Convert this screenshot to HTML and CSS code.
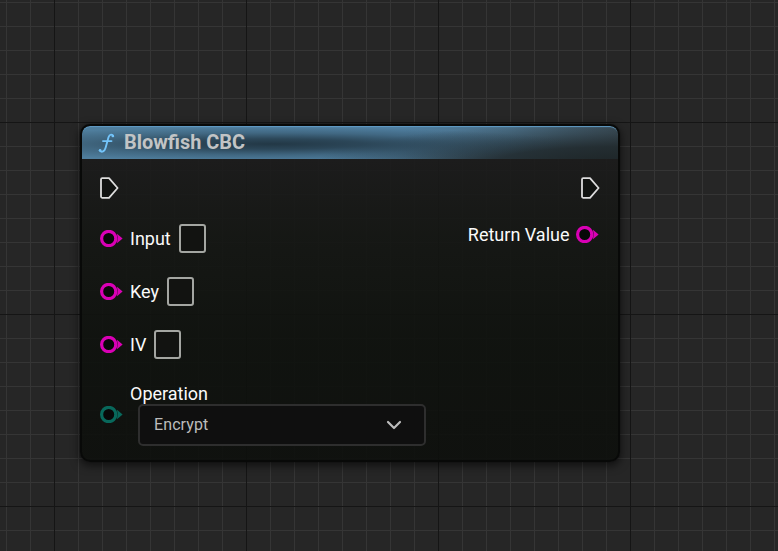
FILE: index.html
```html
<!DOCTYPE html>
<html lang="en">
<head>
<meta charset="utf-8">
<title>Blueprint graph</title>
<link rel="stylesheet" href="styles.css">
</head>
<body>
<svg width="0" height="0" class="defs">
  <symbol id="exec" viewBox="0 0 19 22"><path d="M2.2 1.2H9L17.6 11 9 20.8H2.2Q1 20.8 1 19.6V2.4Q1 1.2 2.2 1.2Z" fill="#101210" stroke="currentColor" stroke-width="1.8" stroke-linejoin="round"/></symbol>
  <symbol id="pin" viewBox="0 0 23 17"><circle cx="8.7" cy="8.5" r="7.1" fill="#080808" stroke="currentColor" stroke-width="3.2"/><path d="M17 3.8 22.6 8.5 17 13.2Q18.4 8.5 17 3.8Z" fill="currentColor"/></symbol>
</svg>
<main class="graph">
  <section class="node">
    <header class="title">
      <svg class="func" viewBox="0 0 17 20" width="17" height="20"><path d="M15.2 3.2C14.5 1 11.6.9 10.5 4.2L7.6 14.8C6.6 18.5 3.7 19.7 1.8 17.7M5 8.1H13.5" fill="none" stroke="currentColor" stroke-width="1.9" stroke-linecap="round"/><circle cx="14.8" cy="3" r="1.3" fill="currentColor"/><circle cx="2.1" cy="17.2" r="1.3" fill="currentColor"/></svg>
      <h1>Blowfish CBC</h1>
    </header>
    <div class="pins">
      <div class="inputs">
        <svg class="exec"><use href="#exec"/></svg>
        <label class="row"><svg class="pin"><use href="#pin"/></svg><span>Input</span><i class="field"></i></label>
        <label class="row"><svg class="pin"><use href="#pin"/></svg><span>Key</span><i class="field"></i></label>
        <label class="row"><svg class="pin"><use href="#pin"/></svg><span>IV</span><i class="field"></i></label>
        <div class="operation">
          <svg class="pin enum"><use href="#pin"/></svg>
          <div>
            <span class="caption">Operation</span>
            <div class="select"><span>Encrypt</span><svg viewBox="0 0 16 10" width="16" height="10"><path d="M2 2 8 8 14 2" fill="none" stroke="currentColor" stroke-width="2.2" stroke-linecap="round" stroke-linejoin="round"/></svg></div>
          </div>
        </div>
      </div>
      <div class="outputs">
        <svg class="exec"><use href="#exec"/></svg>
        <div class="row result"><span>Return Value</span><svg class="pin"><use href="#pin"/></svg></div>
      </div>
    </div>
  </section>
</main>
</body>
</html>
```
FILE: styles.css
```css
* { box-sizing: border-box; }
body { margin: 0; font: 18px/22px Roboto, sans-serif; color: #fafafa; overflow: hidden; }
.defs { position: absolute; }
.graph {
  height: 551px;
  padding: 124px 0 0 80px;
  background:
    linear-gradient(90deg, #151515 1px, transparent 1px) 54px 0 / 192px 192px,
    linear-gradient(#151515 1px, transparent 1px) 0 122px / 192px 192px,
    linear-gradient(90deg, #353535 1px, transparent 1px) 6px 0 / 24px 24px,
    linear-gradient(#353535 1px, transparent 1px) 0 2px / 24px 24px,
    #262626;
}
.node {
  width: 540px;
  height: 338px;
  border: 2px solid #080908;
  border-radius: 10px;
  overflow: hidden;
  background: linear-gradient(rgba(27,27,27,.9) 33px, rgba(20,22,19,.9) 110px, rgba(14,17,13,.9) 220px, rgba(13,15,12,.9));
  box-shadow: 0 0 1px rgba(0,0,0,.5), 0 3px 9px 1px rgba(0,0,0,.55);
}
.title {
  display: flex;
  align-items: center;
  height: 33px;
  padding: 0 0 0 16px;
  border-radius: 8px 8px 0 0;
  background:
    radial-gradient(ellipse 300px 17px at 190px 18px, rgba(32,52,65,.95), rgba(32,52,65,.75) 30%, rgba(32,52,65,.3) 65%, transparent),
    radial-gradient(ellipse 300px 38px at 536px 36px, #1e2628, rgba(31,39,42,.85) 40%, rgba(31,39,42,.3) 75%, transparent),
    linear-gradient(90deg, #4f7e9d 0%, #4f7e9f 60%, #4a6e86 80%, #3b4d58 100%);
  box-shadow: inset 0 2px 1px -1px #619cc5;
}
.func { color: #73c4fa; margin-top: 1px; }
h1 { margin: 1px 0 0 9px; font-size: 19.9px; line-height: 24px; font-weight: 700; color: #c2c4c5; }
.pins { display: flex; justify-content: space-between; padding: 18px 18px 0 18px; }
.exec { display: block; width: 19px; height: 22px; color: #ddd; }
.row { display: flex; align-items: center; height: 29px; margin-bottom: 24px; }
.inputs .exec { margin-bottom: 25px; }
.pin { display: block; width: 23px; height: 17px; color: #d900b5; flex: none; }
.inputs .row span { margin: 0 8px 0 7px; }
.field { width: 27px; height: 29px; border: 2px solid #a4a6a2; border-radius: 3px; background: #121311; }
.operation { display: flex; align-items: center; }
.enum { color: #08685b; }
.caption { display: block; height: 21px; margin-left: 7px; }
.select {
  display: flex; align-items: center; justify-content: space-between;
  width: 288px; height: 42px; margin-left: 15px; padding: 0 22px 0 14px;
  border: 2px solid #2e2e2e; border-radius: 5px; background: #0f0f0f;
  color: #bcbcbc; font-size: 16px; letter-spacing: .1px;
}
.outputs .exec { margin-left: auto; }
.result { margin-top: 21px; }
.result span { margin-right: 6.5px; }
.result .pin { margin-right: 1px; }
```
